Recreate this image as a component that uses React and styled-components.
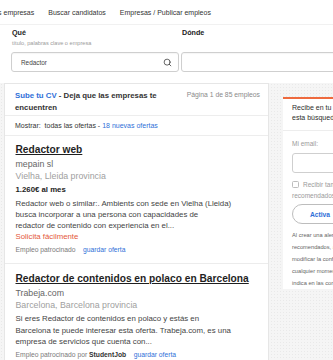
import React from 'react';
import styled, { createGlobalStyle } from 'styled-components';
import { Search, MapPin } from 'lucide-react';

const GlobalStyle = createGlobalStyle`
  html, body { margin: 0; padding: 0; overflow: hidden; background: #fff; }
  body { font-family: "Liberation Sans", Arial, Helvetica, sans-serif; color: #2d2d2d; }
  * { box-sizing: border-box; }
`;

const Page = styled.div`
  width: 460px;
  min-height: 360px;
`;

const Nav = styled.nav`
  display: flex;
  align-items: center;
  gap: 14px;
  height: 25px;
  margin-left: -59px;
  border-bottom: 1px solid #f1f1f1;
`;

const NavItem = styled.a`
  font-size: 7px;
  color: #333;
  white-space: nowrap;
  text-decoration: none;
`;

const SearchRow = styled.div`
  display: flex;
  gap: 2px;
  padding: 3px 0 11px 10.5px;
  background: #fff;
`;

const Field = styled.div`
  display: flex;
  flex-direction: column;
  width: ${p => p.$w}px;
  flex-shrink: 0;
`;

const Label = styled.div`
  font-size: 7.2px;
  font-weight: bold;
  line-height: 10px;
  padding-left: 1.5px;
  color: #222;
`;

const Hint = styled.div`
  font-size: 5.6px;
  line-height: 8px;
  height: 8px;
  margin-top: 1px;
  padding-left: 1.5px;
  color: #9a9a9a;
  white-space: nowrap;
`;

const InputBox = styled.div`
  margin-top: 5px;
  height: 20px;
  border: 1px solid #cfcfcf;
  border-radius: 3px;
  box-shadow: inset 0 1px 1px rgba(0,0,0,0.04);
  display: flex;
  align-items: center;
  justify-content: space-between;
  padding: 0 6px 0 9.5px;
  font-size: 6.4px;
  color: #444;
`;

const Content = styled.div`
  display: flex;
  align-items: flex-start;
  padding-left: 4px;
  min-height: 280px;
  background-color: #f5f5f5;
  background-image: radial-gradient(#e9e9e9 0.6px, transparent 0.7px);
  background-size: 3px 3px;
`;

const LeftPanel = styled.section`
  width: 265px;
  flex-shrink: 0;
  background: #fff;
  border: 1px solid #e6e6e6;
  border-bottom: none;
`;

const PanelHeader = styled.div`
  display: flex;
  justify-content: space-between;
  padding: 6px 8px 1px 10px;
  border-bottom: 1px solid #ededed;
`;

const Promo = styled.div`
  max-width: 160px;
  font-size: 7.8px;
  font-weight: bold;
  line-height: 12px;
  color: #333;
`;

const BlueLink = styled.a`
  color: #2f6fd8;
  text-decoration: none;
  font-weight: ${p => (p.$bold ? 'bold' : 'normal')};
`;

const PageCount = styled.div`
  font-size: 6.8px;
  line-height: 10px;
  color: #8a8a8a;
  white-space: nowrap;
`;

const FilterRow = styled.div`
  height: 20px;
  display: flex;
  align-items: center;
  padding-left: 10px;
  font-size: 7px;
  color: #333;
  border-bottom: 1px solid #ededed;
  white-space: pre;
`;

const JobCard = styled.article`
  padding: ${p => p.$pt}px 10px ${p => p.$pb}px 10.5px;
  border-bottom: 1px solid #ececec;
`;

const JobTitle = styled.a`
  display: block;
  font-size: 10.2px;
  font-weight: bold;
  line-height: 14px;
  color: #1f1f1f;
  text-decoration: underline;
  text-underline-offset: 1px;
  white-space: nowrap;
`;

const Company = styled.div`
  margin-top: 1px;
  font-size: 8.8px;
  line-height: 12px;
  color: #666;
`;

const Location = styled.div`
  margin-top: 0.5px;
  font-size: 8.8px;
  line-height: 12px;
  color: #a0a0a0;
`;

const Salary = styled.div`
  margin-top: 2px;
  font-size: 7.8px;
  font-weight: bold;
  line-height: 12px;
  color: #222;
`;

const Description = styled.p`
  margin: ${p => p.$mt}px 0 0;
  font-size: 7.85px;
  line-height: ${p => p.$lh}px;
  color: #444;
  white-space: nowrap;
`;

const EasyApply = styled.div`
  font-size: 7.8px;
  line-height: 11px;
  color: #e4583a;
`;

const Footer = styled.div`
  display: flex;
  gap: 7.5px;
  margin-top: ${p => p.$mt}px;
  font-size: 6.75px;
  line-height: 11px;
  color: #7a7a7a;
  white-space: nowrap;
  b { color: #333; }
`;

const SaveLink = styled.a`
  color: #2f6fd8;
  text-decoration: none;
`;

const RightColumn = styled.aside`
  margin: 14px 0 0 14px;
  width: 112px;
  flex-shrink: 0;
`;

const AlertCard = styled.div`
  background: #fff;
  border-top: 2px solid #ee6a3e;
`;

const AlertHead = styled.div`
  padding: 4px 0 7px 9px;
  font-size: 7px;
  line-height: 10px;
  color: #2d2d2d;
  white-space: nowrap;
  border-bottom: 1px solid #ededed;
`;

const AlertBody = styled.div`
  padding: 8px 0 0 9px;
`;

const SmallLabel = styled.div`
  font-size: 6.5px;
  line-height: 10px;
  color: #9a9a9a;
`;

const EmailInput = styled.div`
  margin-top: 4px;
  height: 20px;
  border: 1px solid #cfcfcf;
  border-radius: 3px;
`;

const CheckLine = styled.div`
  margin-top: 7px;
  font-size: 6.5px;
  line-height: 10.5px;
  color: #9a9a9a;
  white-space: nowrap;
`;

const CheckBox = styled.span`
  display: inline-block;
  width: 7px;
  height: 7px;
  border: 1px solid #bdbdbd;
  border-radius: 1.5px;
  margin-right: 4px;
  vertical-align: -1px;
`;

const PillButton = styled.button`
  margin-top: 3px;
  width: 56px;
  height: 20px;
  border: 1px solid #bdbdbd;
  border-radius: 10px;
  background: #fff;
  font-family: inherit;
  font-size: 6.7px;
  font-weight: bold;
  color: #2f6fd8;
  padding: 0;
`;

const Disclaimer = styled.p`
  margin: 5px 0 0;
  font-size: 5.7px;
  line-height: 12px;
  color: #666;
  white-space: nowrap;
`;

export default function App() {
  return (
    <Page>
      <GlobalStyle />
      <Nav>
        <NavItem>Valoraciones de las empresas</NavItem>
        <NavItem>Buscar candidatos</NavItem>
        <NavItem>Empresas / Publicar empleos</NavItem>
      </Nav>

      <SearchRow>
        <Field $w={168}>
          <Label>Qué</Label>
          <Hint>título, palabras clave o empresa</Hint>
          <InputBox>
            <span>Redactor</span>
            <Search size={9} strokeWidth={2} color="#333" />
          </InputBox>
        </Field>
        <Field $w={170}>
          <Label>Dónde</Label>
          <Hint />
          <InputBox>
            <span />
            <MapPin size={9} strokeWidth={2} color="#333" />
          </InputBox>
        </Field>
      </SearchRow>

      <Content>
        <LeftPanel>
          <PanelHeader>
            <Promo>
              <BlueLink $bold>Sube tu CV</BlueLink> - Deja que las empresas te encuentren
            </Promo>
            <PageCount>Página 1 de 85 empleos</PageCount>
          </PanelHeader>
          <FilterRow>
            Mostrar:  todas las ofertas - <BlueLink>18 nuevas ofertas</BlueLink>
          </FilterRow>

          <JobCard $pt={6.5} $pb={8.5}>
            <JobTitle>Redactor web</JobTitle>
            <Company>mepain sl</Company>
            <Location>Vielha, Lleida provincia</Location>
            <Salary>1.260€ al mes</Salary>
            <Description $mt={1.5} $lh={11}>
              Redactor web o similar:. Ambients con sede en Vielha (Lleida)
              <br />
              busca incorporar a una persona con capacidades de
              <br />
              redactor de contenido con experiencia en el...
            </Description>
            <EasyApply>Solicita fácilmente</EasyApply>
            <Footer $mt={2}>
              <span>Empleo patrocinado</span>
              <SaveLink>guardar oferta</SaveLink>
            </Footer>
          </JobCard>

          <JobCard $pt={7.5} $pb={8}>
            <JobTitle>Redactor de contenidos en polaco en Barcelona</JobTitle>
            <Company>Trabeja.com</Company>
            <Location>Barcelona, Barcelona provincia</Location>
            <Description $mt={2} $lh={11.5}>
              Si eres Redactor de contenidos en polaco y estás en
              <br />
              Barcelona te puede interesar esta oferta. Trabeja.com, es una
              <br />
              empresa de servicios que cuenta con...
            </Description>
            <Footer $mt={1}>
              <span>Empleo patrocinado por <b>StudentJob</b></span>
              <SaveLink>guardar oferta</SaveLink>
            </Footer>
          </JobCard>
        </LeftPanel>

        <RightColumn>
          <AlertCard>
            <AlertHead>
              Recibe en tu correo los nuevos empleos para
              <br />
              esta búsqueda
            </AlertHead>
            <AlertBody>
              <SmallLabel>Mi email:</SmallLabel>
              <EmailInput />
              <CheckLine>
                <CheckBox />
                Recibir también empleos
                <br />
                recomendados por correo
              </CheckLine>
              <PillButton>Activa</PillButton>
              <Disclaimer>
                Al crear una alerta de empleo o recibir empleos
                <br />
                recomendados, aceptas nuestras Condiciones. Puedes
                <br />
                modificar la configuración de tu consentimiento en
                <br />
                cualquier momento cancelando la suscripción o como se
                <br />
                indica en las condiciones.
              </Disclaimer>
            </AlertBody>
          </AlertCard>
        </RightColumn>
      </Content>
    </Page>
  );
}
